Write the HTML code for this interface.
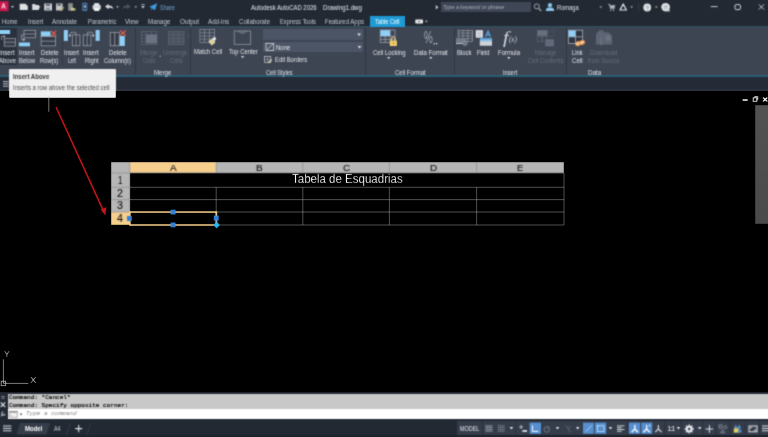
<!DOCTYPE html>
<html><head><meta charset="utf-8"><title>AutoCAD</title>
<style>
html,body{margin:0;padding:0;background:#000;}
body{width:768px;height:437px;position:relative;overflow:hidden;font-family:"Liberation Sans",sans-serif;}
.a{position:absolute;}
.t{position:absolute;white-space:nowrap;transform-origin:0 50%;}
svg{position:absolute;left:0;top:0;overflow:visible;}
#w{position:absolute;left:-6px;top:-6px;width:780px;height:449px;filter:url(#bl);}
#c{position:absolute;left:6px;top:6px;width:768px;height:437px;}
</style></head><body><svg width="0" height="0" style="position:absolute"><defs><filter id="bl" x="0" y="0" width="100%" height="100%" color-interpolation-filters="sRGB"><feConvolveMatrix order="3" kernelMatrix="0.03610 0.11780 0.03610 0.11780 0.38440 0.11780 0.03610 0.11780 0.03610" divisor="1" edgeMode="duplicate" preserveAlpha="true"/></filter></defs></svg><div id="w"><div id="c">
<!-- title + tabs -->
<div class="a" style="left:-6px;top:-6px;width:780px;height:32px;background:#222933"></div>
<!-- ribbon -->
<div class="a" style="left:-6px;top:26px;width:780px;height:50.5px;background:#3d4452"></div>
<div class="a" style="left:-6px;top:26px;width:780px;height:1.2px;background:#2c5463"></div>
<div class="a" style="left:-6px;top:75px;width:780px;height:1.5px;background:#2c5c73"></div>
<!-- strip below -->
<div class="a" style="left:-6px;top:76.5px;width:780px;height:13.5px;background:#252b36"></div>
<div class="a" style="left:-6px;top:89.7px;width:780px;height:1.6px;background:#3d4450"></div>
<!-- table cell tab -->
<div class="a" style="left:369.7px;top:16.3px;width:35px;height:10.5px;background:#1e9ad6"></div>
<!-- search box -->
<div class="a" style="left:440.8px;top:2.1px;width:90.2px;height:10px;background:#3f4757"></div>
<!-- insert above hover -->
<div class="a" style="left:-6px;top:28px;width:22.5px;height:36.5px;background:#2a313d"></div>
<!-- separators -->
<div class="a" style="left:135px;top:28px;width:1px;height:46px;background:#2f3744"></div>
<div class="a" style="left:190px;top:28px;width:1px;height:46px;background:#2f3744"></div>
<div class="a" style="left:365px;top:28px;width:1px;height:46px;background:#2f3744"></div>
<div class="a" style="left:454px;top:28px;width:1px;height:46px;background:#2f3744"></div>
<div class="a" style="left:566px;top:28px;width:1px;height:46px;background:#2f3744"></div>
<div class="a" style="left:62px;top:28px;width:1px;height:36px;background:#343c49"></div>
<!-- dropdowns -->
<div class="a" style="left:263px;top:29px;width:99.7px;height:10.8px;background:#4c5566"></div>
<div class="a" style="left:263px;top:42px;width:99.7px;height:9.6px;background:#4c5566"></div>
<!-- ICONS -->
<!--ICONS-->
<!-- tooltip -->
<div class="a" style="left:8.7px;top:68.5px;width:107px;height:29px;background:#f0f0f0;border-radius:1px"></div>
<!-- drawing right panel -->
<div class="a" style="left:754.8px;top:105px;width:19.2px;height:118.5px;background:linear-gradient(#525252,#4a4a4a)"></div>
<!-- table -->
<div class="a" style="left:111px;top:162px;width:453px;height:11px;background:#b6b6b6"></div>
<div class="a" style="left:111px;top:162px;width:18.7px;height:63px;background:#b6b6b6"></div>
<div class="a" style="left:129.7px;top:162px;width:86.5px;height:11px;background:#f6cf8e"></div>
<div class="a" style="left:111px;top:212px;width:18.7px;height:13px;background:#f6cf8e"></div>
<!-- command line -->
<div class="a" style="left:-6px;top:391.5px;width:780px;height:28px;background:#222933"></div>
<div class="a" style="left:8px;top:394px;width:766px;height:15.4px;background:#c8c8c8"></div>
<div class="a" style="left:8px;top:409.4px;width:766px;height:9.9px;background:#ffffff"></div>
<!-- status bar -->
<div class="a" style="left:-6px;top:419.3px;width:780px;height:23.7px;background:#222933"></div>
<div class="a" style="left:457px;top:421px;width:317px;height:14.6px;background:#353d4b"></div>
<div class="a" style="left:-6px;top:434.8px;width:780px;height:8.2px;background:#1d232c"></div>
<svg width="768" height="437" viewBox="0 0 768 437">
<!-- ===== title bar ===== -->
<g id="titlebar">
<rect x="-6" y="1.2" width="14.5" height="10" fill="#c8184e"/>
<path d="M1.3 8.4 L3 3.2 L4.1 3.2 L5.8 8.4 L4.7 8.4 L4.35 7.3 L2.75 7.3 L2.4 8.4 Z M3 6.4 L4.1 6.4 L3.55 4.6 Z" fill="#fbe4ea"/>
<path d="M11 6 L14 6 L12.5 8 Z" fill="#c8ccd4"/>
<!-- new -->
<path d="M19.7 3.8 L25.5 3.8 L27.8 6 L27.8 10 L19.7 10 Z" fill="#dfe1e4"/>
<!-- open -->
<path d="M32.2 4 L35 4 L35.8 5 L39 5 L39 6.2 L40.3 6.2 L38.6 10 L32.2 10 Z" fill="#d9dbdf"/>
<!-- save -->
<rect x="44.2" y="3.5" width="7.8" height="7" fill="#cfd2d6"/><rect x="45.8" y="3.5" width="4.4" height="2.6" fill="#6d7480"/><rect x="46" y="7.6" width="4" height="2.9" fill="#8e949e"/>
<!-- save as -->
<rect x="56" y="3.5" width="6.6" height="7" fill="#c4c7cc"/><rect x="57.2" y="3.5" width="3.8" height="2.4" fill="#6d7480"/><path d="M60 10.5 L63.5 6.5 L64 8 L61.5 11 Z" fill="#b7a76a"/>
<!-- import pdf-ish -->
<rect x="68.2" y="3.2" width="4.6" height="7.3" fill="#8c9088"/><path d="M70.6 10.6 L71.4 7.6 L75.4 8.4 L75.4 10.6 Z" fill="#cfcf96"/>
<!-- mobile -->
<rect x="82.2" y="2.8" width="5.2" height="8.2" rx="0.8" fill="#4f79a6"/><rect x="83.1" y="4" width="3.4" height="5.4" fill="#2d3f58"/><rect x="83.8" y="5.4" width="2.2" height="2.2" fill="#9fbfe0"/>
<!-- print -->
<rect x="92.6" y="5" width="8.2" height="4.6" rx="1" fill="#d5d8dc"/><rect x="94.2" y="3.2" width="5" height="2.2" fill="#eceef0"/><rect x="94.2" y="8" width="5" height="3" fill="#f2f3f5"/>
<!-- undo -->
<path d="M105 6.6 L108.6 3.9 L108.6 5.5 C111.3 5.5 112.9 6.6 113.3 9 C112 7.9 110.8 7.6 108.6 7.7 L108.6 9.3 Z" fill="#d9dce0"/>
<path d="M116.2 6.2 L118.8 6.2 L117.5 7.9 Z" fill="#c8ccd4"/>
<!-- redo dim -->
<path d="M130.6 6.6 L127 3.9 L127 5.5 C124.4 5.5 123 6.6 122.7 9 C124 7.9 125 7.6 127 7.7 L127 9.3 Z" fill="#4e5562"/>
<path d="M134.5 6.2 L137.1 6.2 L135.8 7.9 Z" fill="#aeb3bc"/>
<path d="M141.3 4.6 L144.7 4.6" stroke="#c8ccd4" stroke-width="0.8"/><path d="M141.2 6 L144.8 6 L143 8.4 Z" fill="#c8ccd4"/>
<!-- share -->
<path d="M149.2 6.8 L157.2 3.2 L155 10.6 L152.8 8.4 L151.6 10.4 L151.4 7.8 Z" fill="#3d9be0"/>
<!-- search arrow -->
<path d="M435.8 5 L438.4 7.2 L435.8 9.4 Z" fill="#d0d4da"/>
<!-- magnifier -->
<circle cx="536.8" cy="6.4" r="2.5" fill="none" stroke="#b0b6bf" stroke-width="0.9"/><path d="M538.6 8.4 L541.2 11" stroke="#b0b6bf" stroke-width="1.1"/>
<!-- user -->
<circle cx="550" cy="5.2" r="2.1" fill="#8ec6ee"/><path d="M545.8 11 C545.8 8 548 7.6 550 7.6 C552 7.6 554.2 8 554.2 11 Z" fill="#8ec6ee"/>
<path d="M599.5 6.4 L602.1 6.4 L600.8 8.1 Z" fill="#c8ccd4"/>
<!-- cart -->
<path d="M608 4.2 L609.4 4.2 L610.4 8.6 L614.2 8.6 L614.9 5.4 L609.8 5.4" fill="#aeb4bd" stroke="#aeb4bd" stroke-width="0.7"/><circle cx="610.8" cy="10.2" r="0.7" fill="#c0c4cb"/><circle cx="613.6" cy="10.2" r="0.7" fill="#c0c4cb"/>
<!-- autodesk A -->
<path d="M623.2 4 L626.4 10 L620 10 Z" fill="none" stroke="#e8eaee" stroke-width="1.2" stroke-linejoin="round"/>
<path d="M630.4 6.4 L633 6.4 L631.7 8.1 Z" fill="#c8ccd4"/>
<rect x="638.4" y="3" width="0.7" height="9" fill="#3a4250"/>
<!-- help -->
<circle cx="647.2" cy="7.5" r="3.9" fill="#dcdfe3"/>
<path d="M655 6.4 L657.6 6.4 L656.3 8.1 Z" fill="#c8ccd4"/>
<!-- chat -->
<path d="M661.4 7.4 A4.2 4 0 1 1 666 11.3 L669.8 11.4 L669.6 8 Z" fill="#dcdfe3"/><circle cx="665.6" cy="7.3" r="4.1" fill="#dcdfe3"/><path d="M664 6.2 H668 M664 8 H667" stroke="#8a909a" stroke-width="0.7"/>
<!-- window controls -->
<rect x="710.8" y="6.2" width="6.8" height="0.9" fill="#d8dbe0"/>
<rect x="735" y="4.6" width="5.4" height="5" rx="1.2" fill="none" stroke="#d8dbe0" stroke-width="1"/>
<path d="M758.8 4.4 L764 9.6 M764 4.4 L758.8 9.6" stroke="#d8dbe0" stroke-width="0.9"/>
<!-- tab extra icon -->
<rect x="415.3" y="19.4" width="7.7" height="4" rx="0.6" fill="#e8eaee"/><rect x="418" y="21" width="2.2" height="0.8" fill="#555"/>
<path d="M425 20.8 L427.6 20.8 L426.3 22.5 Z" fill="#c8ccd4"/>
</g>
<!-- ===== ribbon icons ===== -->
<g id="ribbon" fill="none" stroke="#a6acb7" stroke-width="0.7">
<!-- insert above -->
<rect x="-6" y="30" width="16.1" height="4" fill="#8fd0f7" stroke="none"/>
<rect x="4.2" y="38.3" width="11.4" height="7.8" fill="#343b47"/><path d="M4.2 42.2 H15.4"/>
<path d="M1.6 40 V36.4 H4.6"/><path d="M3.8 35.2 L5.4 36.4 L3.8 37.6 Z" fill="#e8eaee" stroke="none"/>
<!-- insert below -->
<rect x="24" y="30.3" width="11.4" height="7.5" fill="#343b47"/><path d="M24 34 H35.4"/>
<rect x="18.8" y="42.5" width="11.2" height="3.8" fill="#8fd0f7" stroke="none"/>
<path d="M24 35 H21.6 V39.8 H24"/><path d="M23.4 38.5 L25.2 39.8 L23.4 41.1 Z" fill="#e8eaee" stroke="none"/>
<!-- delete rows -->
<rect x="40.8" y="31.4" width="9.8" height="5" fill="#8fd0f7" stroke="none"/>
<rect x="41.1" y="36.5" width="14.4" height="9.4" fill="#343b47"/><path d="M41.1 41.2 H55.5"/>
<path d="M51.4 30.9 L56.2 36 M56.2 30.9 L51.4 36" stroke="#e2604c" stroke-width="1.3"/>
<!-- insert left -->
<rect x="63.8" y="30" width="4.1" height="10.9" fill="#8fd0f7" stroke="none"/>
<rect x="72.3" y="34.9" width="7.6" height="10.9" fill="#343b47"/><path d="M76.1 34.9 V45.8"/>
<path d="M75.8 34.9 V32.3 H71 L70.2 34.8"/><circle cx="69.9" cy="35.6" r="0.9" fill="#eef0f3" stroke="none"/>
<!-- insert right -->
<rect x="95.6" y="30" width="4.1" height="10.9" fill="#8fd0f7" stroke="none"/>
<rect x="83.3" y="34.9" width="7.6" height="10.9" fill="#343b47"/><path d="M87.1 34.9 V45.8"/>
<path d="M87.5 34.9 V32.3 H92.4 L93.1 34.8"/><circle cx="93.2" cy="35.6" r="0.9" fill="#eef0f3" stroke="none"/>
<!-- delete columns -->
<rect x="110.2" y="32.3" width="9" height="13.5" fill="#343b47"/><path d="M114.7 32.3 V45.8"/>
<rect x="119.6" y="36" width="5.2" height="10" fill="#8fd0f7" stroke="none"/>
<path d="M120.2 30.5 L125.8 35.7 M125.8 30.5 L120.2 35.7" stroke="#e2604c" stroke-width="1.3"/>
<!-- merge cells (disabled) -->
<g stroke="#5f6776">
<rect x="141.4" y="31.6" width="15.6" height="13"/><path d="M141.4 35 H157 M141.4 38.4 H146 M141.4 41.6 H146 M146 31.6 V44.6 M151.5 31.6 V35"/>
<rect x="146" y="34.4" width="11" height="9" fill="#6b7382" stroke="none"/>
<path d="M159.2 55.8 L161.2 55.8 L160.2 57.2 Z" fill="#aeb3bc" stroke="none"/>
<!-- unmerge -->
<rect x="168.4" y="31.6" width="15.6" height="13" fill="#474f5d"/><path d="M168.4 35 H184 M168.4 38.4 H184 M168.4 41.6 H184 M173.2 31.6 V44.6 M178.6 31.6 V44.6"/>
</g>
<path d="M188 35.8 L189.4 35.8 L188.7 36.8 Z" fill="#8a909c" stroke="none"/>
<!-- match cell -->
<g stroke="#959ca8" stroke-width="0.6"><rect x="199.9" y="29.4" width="14.8" height="13.1"/><path d="M199.9 32.7 H214.7 M199.9 36 H214.7 M199.9 39.2 H214.7 M204.5 29.4 V42.5 M209.4 29.4 V42.5"/></g>
<path d="M208.2 41.4 L211.8 38.6 L215.4 42.6 L211.8 45.6 Z" fill="#ddd3a0" stroke="none"/><path d="M212 38.8 L214.6 36.8 L216.2 38.6 L214.6 41.6 Z" fill="#eeeeea" stroke="none"/>
<!-- top center -->
<rect x="234.2" y="31" width="16.5" height="13.3" stroke="#9aa1ad"/><path d="M237.8 31.2 L242.5 33.8 L247.2 31.2 Z" fill="#5a6271" stroke="#8a919d" stroke-width="0.5"/>
<path d="M241 56 L244.2 56 L242.6 58.2 Z" fill="#d8dbe0" stroke="none"/>
<!-- dropdown arrows -->
<path d="M357.2 33.6 L361 33.6 L359.1 36 Z" fill="#e0e3e8" stroke="none"/>
<path d="M357.6 46 L361.4 46 L359.5 48.4 Z" fill="#e0e3e8" stroke="none"/>
<rect x="266" y="43.3" width="7.8" height="7.2" stroke="#e8eaee"/><path d="M267 49.6 L272.8 44.2" stroke="#e8eaee"/>
<!-- edit borders -->
<rect x="264.4" y="56.4" width="6.4" height="6.2" stroke="#c8ccd4" stroke-width="0.7"/><path d="M267.6 56.4 V62.6 M264.4 59.5 H270.8" stroke-width="0.6"/><path d="M268.6 62.8 L271.6 59.6" stroke="#e8e2b8" stroke-width="1.3"/>
<!-- cell locking -->
<rect x="380.2" y="30" width="14.8" height="12.6"/><path d="M380.2 36.2 H395 M380.2 39.4 H395 M385.2 30 V42.6 M390.2 30 V42.6"/>
<rect x="380.4" y="30.2" width="9.6" height="5.8" fill="#8fd0f7" stroke="none"/>
<path d="M391.5 40.8 V39 A1.9 1.9 0 0 1 395.3 39 V40.8" stroke="#f3cf6a" stroke-width="1"/>
<rect x="389.8" y="40.4" width="7.1" height="5.6" rx="0.6" fill="#f3cf6a" stroke="none"/><rect x="393" y="42.2" width="0.8" height="2" fill="#a07c28" stroke="none"/>
<path d="M387.1 57 L390.3 57 L388.7 59.2 Z" fill="#d8dbe0" stroke="none"/>
<!-- data format dots -->
<rect x="433.6" y="43" width="1.3" height="1.3" fill="#e8eaee" stroke="none"/><rect x="436" y="43" width="1.3" height="1.3" fill="#e8eaee" stroke="none"/>
<path d="M429.2 57 L432.4 57 L430.8 59.2 Z" fill="#d8dbe0" stroke="none"/>
<!-- block -->
<rect x="458.2" y="30.3" width="14.3" height="11.2" stroke="#aab0bb" stroke-width="0.6"/><path d="M458.2 33.1 H472.5 M458.2 35.9 H472.5 M458.2 38.7 H472.5 M463 30.3 V41.5 M467.8 30.3 V41.5" stroke="#aab0bb" stroke-width="0.6"/>
<rect x="456" y="38.2" width="10.2" height="5.4" fill="#737b89" stroke="none"/><rect x="456" y="43" width="8" height="0.9" fill="#c8ccd4" stroke="none"/><circle cx="465" cy="43.2" r="2.2" fill="#6d7583" stroke="#9aa0ac" stroke-width="0.6"/>
<!-- field -->
<rect x="475.8" y="30.2" width="7" height="7.4" fill="#eef0f2" stroke="none"/><path d="M477 32 H481.6 M477 33.8 H481.6 M477 35.6 H481.6" stroke="#7a8290" stroke-width="0.6"/>
<path d="M485.5 36.8 L488 31.2 L490.5 36.8 M486.4 34.9 H489.6" stroke="#5aa9e6" stroke-width="1.1"/>
<rect x="479.8" y="37.8" width="12.2" height="1.6" fill="#5a9fdc" stroke="none"/><rect x="479.8" y="39.4" width="12.2" height="2" fill="#90ccf6" stroke="none"/><rect x="479.8" y="41.4" width="12.2" height="4.2" fill="#dfe3e8" stroke="none"/><path d="M479.8 43.5 H492" stroke="#9aa0aa" stroke-width="0.5"/>
<path d="M507.2 57 L510.4 57 L508.8 59.2 Z" fill="#d8dbe0" stroke="none"/>
<!-- manage cell contents (disabled) -->
<rect x="537.2" y="30.2" width="10.2" height="5.6" fill="#687080" stroke="none"/>
<rect x="537.4" y="36.6" width="4.4" height="5" stroke="#5f6776" stroke-width="0.6"/><rect x="542.4" y="36.6" width="4.4" height="5" stroke="#5f6776" stroke-width="0.6"/>
<rect x="545.3" y="39.4" width="8.7" height="6.8" fill="#687080" stroke="none"/><path d="M545.3 41.8 H554 M545.3 44 H554" stroke="#4a5262" stroke-width="0.5"/>
<rect x="548" y="31" width="5.4" height="5.4" stroke="#4f5766" stroke-width="0.6"/>
<!-- link cell -->
<rect x="568.3" y="30.2" width="14.4" height="13.2" fill="#2c3441" stroke="#b8bdc7" stroke-width="0.7"/>
<rect x="568.6" y="30.4" width="6.8" height="6.4" fill="#8fd0f7" stroke="none"/>
<path d="M575.5 30.2 V43.4 M568.3 36.8 H582.7" stroke="#b8bdc7" stroke-width="0.7"/>
<ellipse cx="578.2" cy="43.6" rx="2.7" ry="1.9" fill="#f0d2a6" stroke="#e08a48" stroke-width="1.1" transform="rotate(-18 578.2 43.6)"/>
<ellipse cx="582" cy="42.5" rx="2.7" ry="1.9" fill="#f0d2a6" stroke="#e08a48" stroke-width="1.1" transform="rotate(-18 582 42.5)"/>
<!-- download (disabled) -->
<path d="M596 44.6 V36 C596 32 599 30.2 602 30.2 C603.4 30.2 604 31.4 604 32.4 C607 31.6 611.8 33 612 37 V44.6 Z" fill="#5d6574" stroke="none"/>
<rect x="605.6" y="35.6" width="5" height="5" fill="#6b7382" stroke="none"/><rect x="600.4" y="37" width="1.4" height="8.4" fill="#6b7382" stroke="none"/>
</g>
<!-- ===== strip hamburger ===== -->
<g stroke="#d0d4da" stroke-width="0.9"><path d="M3 81.6 H8.4 M3 83.9 H8.4 M3 86.2 H8.4"/></g>
<!-- cursor line + red arrow -->
<rect x="48.3" y="97" width="1" height="15" fill="#8c8c8c"/>
<path d="M56 107 L104.2 212.6" stroke="#c4161c" stroke-width="1.7"/>
<path d="M105.4 215.8 L100.6 209.6 L106.4 207 Z" fill="#c4161c"/>
<!-- viewport controls -->
<rect x="742.6" y="99.1" width="5.2" height="1.9" fill="#f4f4f4"/>
<rect x="753.2" y="97.8" width="3.6" height="3.6" fill="none" stroke="#f0f0f0" stroke-width="1"/><path d="M754.6 97.4 V96.5 H757.8 V99.8 H757" fill="none" stroke="#f0f0f0" stroke-width="0.9"/>
<path d="M763 97.6 L767.4 101.6 M767.4 97.6 L763 101.6" stroke="#f0f0f0" stroke-width="1.3"/>
<!-- table grid -->
<g stroke="#6c6c6c" stroke-width="0.9" fill="none">
<path d="M129.7 173 H564 M129.7 187.3 H564 M129.7 199.6 H564 M129.7 212 H564 M129.7 225 H564"/>
<path d="M216.2 187.3 V225 M302.8 187.3 V225 M389.4 187.3 V225 M476.6 187.3 V225 M564 173 V225"/>
</g>
<g stroke="#8e8e8e" stroke-width="0.7"><path d="M111 173 H129.7 M111 187.3 H129.7 M111 199.6 H129.7 M111 212 H129.7 M216.2 162 V173 M302.8 162 V173 M389.4 162 V173 M476.6 162 V173 M129.7 162 V225"/></g>
<!-- selection -->
<rect x="129.9" y="212.1" width="86.4" height="12.9" fill="none" stroke="#f8cf88" stroke-width="1.8"/>
<g fill="#2f7fd8"><rect x="127" y="216" width="5" height="5"/><rect x="170.6" y="209.6" width="5" height="5"/><rect x="170.6" y="222.4" width="5" height="5"/><rect x="213.8" y="215.6" width="5" height="5"/></g>
<path d="M216.6 221.6 L220 225 L216.6 228.4 L213.2 225 Z" fill="#29b6f0"/>
<!-- UCS -->
<g stroke="#adadad" stroke-width="0.9" fill="none"><path d="M3.4 359 V383.4 H28.4"/><rect x="1.2" y="381.2" width="4.4" height="4.4"/></g>
<!-- command left strip -->
<g fill="#c8ccd4"><rect x="1.6" y="396" width="1" height="1"/><rect x="3.4" y="396" width="1" height="1"/><rect x="1.6" y="397.8" width="1" height="1"/><rect x="3.4" y="397.8" width="1" height="1"/></g>
<path d="M0.6 402.4 L5.2 407 M5.2 402.4 L0.6 407" stroke="#e0e3e8" stroke-width="1.1"/>
<path d="M0.8 416.4 L3.8 413.4 M3.2 411.8 A1.8 1.8 0 1 0 5.2 414" stroke="#d0d4da" stroke-width="1" fill="none"/>
<!-- command input icon -->
<rect x="9.2" y="411.2" width="8" height="6" fill="#f4f4f4" stroke="#8a8a8a" stroke-width="0.7"/><rect x="9.2" y="411.2" width="8" height="1.6" fill="#9a9a9a"/><path d="M10.4 415 L12 416" stroke="#666" stroke-width="0.5"/>
<path d="M19.6 413.6 L22.4 413.6 L21 415.4 Z" fill="#555"/>
<!-- status bar left -->
<g stroke="#e0e3e8" stroke-width="1"><path d="M3 426 H11.4 M3 428.4 H11.4 M3 430.8 H11.4"/></g>
<path d="M20 423 H50 L46.5 434.6 H16.5 Z" fill="#353d4a"/>
<path d="M66.5 434.4 L70 423.2" stroke="#343c49" stroke-width="0.9"/><path d="M87 434.4 L90.5 423.2" stroke="#343c49" stroke-width="0.9"/>
<path d="M75.2 428.6 H82.2 M78.7 425 V432.2" stroke="#e0e3e8" stroke-width="1.1"/>
<!-- status bar right icons -->
<rect x="482.0" y="421" width="0.8" height="14" fill="#262d38"/><rect x="627.2" y="421" width="0.8" height="14" fill="#262d38"/><rect x="664.4" y="421" width="0.8" height="14" fill="#262d38"/><rect x="680.6" y="421" width="0.8" height="14" fill="#262d38"/><rect x="702.4" y="421" width="0.8" height="14" fill="#262d38"/><rect x="715.6" y="421" width="0.8" height="14" fill="#262d38"/><rect x="729.6" y="421" width="0.8" height="14" fill="#262d38"/><rect x="759.3000000000001" y="421" width="0.8" height="14" fill="#262d38"/>
<g stroke="#b4bac4" stroke-width="0.55" fill="none">
<path d="M485 425.8 H492.8 M485 427.6 H492.8 M485 429.4 H492.8 M485 431.2 H492.8"/><path d="M487 425 V432 M489 425 V432 M491 425 V432" stroke-width="0.35"/>
<path d="M498.2 425.8 H504.4 M498.2 427.6 H504.4 M498.2 429.4 H504.4 M498.2 431.2 H504.4" stroke-dasharray="0.9 0.9" stroke-width="0.9" stroke="#c0c5ce"/>
</g>
<path d="M509.6 427 L513.2 427 L511.4 429.6 Z" fill="#e0e3e8"/>
<rect x="515.4" y="422" width="0.7" height="14" fill="#2a313d"/>
<path d="M519.2 427 H523 M521.1 425 V429" stroke="#d0d4da" stroke-width="0.8"/><rect x="522.4" y="430" width="4.6" height="2" fill="#d0d4da"/>
<rect x="529.6" y="422.6" width="11.4" height="11.2" fill="#558fd0"/><path d="M532.4 425.4 V431.4 H538.2" stroke="#fff" stroke-width="1" fill="none"/>
<circle cx="546.8" cy="429.4" r="2.8" fill="none" stroke="#8a909c" stroke-width="0.7"/><path d="M546.8 429.4 L548.8 426.6" stroke="#8a909c" stroke-width="0.6"/>
<path d="M555.7 427 L559.3 427 L557.5 429.6 Z" fill="#e0e3e8"/>
<path d="M565.8 425.4 L570.6 432.6 M568.2 429 L570.4 426.2" stroke="#6f7786" stroke-width="0.7"/>
<path d="M575.9 427 L579.5 427 L577.7 429.6 Z" fill="#e0e3e8"/>
<rect x="583" y="422.6" width="10.8" height="11.2" fill="#558fd0"/><path d="M585.8 431.6 L591.9 425.4" stroke="#c4dbf4" stroke-width="0.9"/>
<rect x="594.8" y="422.6" width="11.4" height="11.2" fill="#558fd0"/><rect x="597.6" y="425.8" width="6.4" height="5.6" fill="none" stroke="#c4dbf4" stroke-width="0.8"/><rect x="596.8" y="425" width="1.5" height="1.5" fill="#c4dbf4"/>
<path d="M608.7 427 L612.3 427 L610.5 429.6 Z" fill="#e0e3e8"/>
<path d="M617 425.9 H624.4 M617 427.7 H621.6 M617 429.5 H624.4 M617 431.3 H621.6" stroke="#e0e3e8" stroke-width="0.9"/>
<rect x="628.8" y="422.6" width="11.4" height="11.2" fill="#558fd0"/><path d="M634.8 425 V429 L631.6 432.2 M634.8 429 L638 432.2" stroke="#fff" stroke-width="1.3" fill="none"/>
<rect x="641.3" y="422.6" width="10.9" height="11.2" fill="#558fd0"/><path d="M646.6 425 V429 L643.4 432.2 M646.6 429 L649.8 432.2" stroke="#fff" stroke-width="1.3" fill="none"/><path d="M648.6 425.6 H650.4 M649.5 424.7 V426.5" stroke="#fff" stroke-width="0.5"/>
<path d="M658.4 425 V429 L655.2 432.2 M658.4 429 L661.6 432.2" stroke="#d8dbe0" stroke-width="1.2" fill="none"/>
<path d="M676.7 427 L680.3 427 L678.5 429.6 Z" fill="#e0e3e8"/>
<circle cx="689.2" cy="429" r="2.6" fill="none" stroke="#e4e7eb" stroke-width="1.8"/><g stroke="#e4e7eb" stroke-width="1.3"><path d="M689.2 424.4 V433.6 M684.6 429 H693.8 M686 425.8 L692.4 432.2 M692.4 425.8 L686 432.2"/></g><circle cx="689.2" cy="429" r="1.2" fill="#353d4b"/>
<path d="M697.9 427 L701.5 427 L699.7 429.6 Z" fill="#e0e3e8"/>
<path d="M705.6 429 H713.2 M709.4 425.2 V432.8" stroke="#e4e7eb" stroke-width="1"/>
<g stroke="#8e95a2" stroke-width="0.8" fill="none"><rect x="719" y="425" width="3" height="3"/><circle cx="725.4" cy="427.2" r="1.5"/><path d="M720.6 432.8 L722.6 429.4 L724.6 432.8 Z"/></g>
<path d="M734 428.6 L735.8 424.6 L737.6 428.6 Z M737.4 428.6 L739.2 424.6 L741 428.6 Z" fill="#5a9ad8"/><rect x="733.8" y="428.4" width="5" height="4.2" fill="#e6d262"/><rect x="738.2" y="429.6" width="3.2" height="3" fill="#4f8fd0"/>
<rect x="744.2" y="422" width="0.7" height="14" fill="#2a313d"/>
<rect x="749" y="426" width="8" height="5.8" fill="none" stroke="#e4e7eb" stroke-width="1"/><path d="M750.4 429 V427.4 H752.2 M755.6 428.8 V430.4 H753.8" stroke="#e4e7eb" stroke-width="0.7" fill="none"/>
<g stroke="#e0e3e8" stroke-width="1"><path d="M762 426 H774 M762 428.4 H774 M762 430.8 H774"/></g>

</svg>
<span class="t" style="left:250.8px;top:2.8px;font:normal normal 7px/9px 'Liberation Sans', sans-serif;color:#e8eaee;transform:scaleX(0.846)">Autodesk AutoCAD 2026</span>
<span class="t" style="left:323.0px;top:2.8px;font:normal normal 7px/9px 'Liberation Sans', sans-serif;color:#e8eaee;transform:scaleX(0.879)">Drawing1.dwg</span>
<span class="t" style="left:160.0px;top:2.8px;font:normal normal 7px/9px 'Liberation Sans', sans-serif;color:#78a4cc;transform:scaleX(0.787)">Share</span>
<span class="t" style="left:442.5px;top:3.5px;font:italic normal 5.8px/7.8px 'Liberation Sans', sans-serif;color:#a8aeb8;transform:scaleX(0.919)">Type a keyword or phrase</span>
<span class="t" style="left:557.0px;top:2.8px;font:normal normal 7px/9px 'Liberation Sans', sans-serif;color:#e0e3e8;transform:scaleX(0.820)">Romaga</span>
<span class="t" style="left:2.0px;top:16.5px;font:normal normal 7px/9px 'Liberation Sans', sans-serif;color:#c8ccd3;transform:scaleX(0.829)">Home</span>
<span class="t" style="left:28.0px;top:16.5px;font:normal normal 7px/9px 'Liberation Sans', sans-serif;color:#c8ccd3;transform:scaleX(0.874)">Insert</span>
<span class="t" style="left:52.3px;top:16.5px;font:normal normal 7px/9px 'Liberation Sans', sans-serif;color:#c8ccd3;transform:scaleX(0.892)">Annotate</span>
<span class="t" style="left:87.5px;top:16.5px;font:normal normal 7px/9px 'Liberation Sans', sans-serif;color:#c8ccd3;transform:scaleX(0.842)">Parametric</span>
<span class="t" style="left:125.0px;top:16.5px;font:normal normal 7px/9px 'Liberation Sans', sans-serif;color:#c8ccd3;transform:scaleX(0.897)">View</span>
<span class="t" style="left:147.7px;top:16.5px;font:normal normal 7px/9px 'Liberation Sans', sans-serif;color:#c8ccd3;transform:scaleX(0.882)">Manage</span>
<span class="t" style="left:179.5px;top:16.5px;font:normal normal 7px/9px 'Liberation Sans', sans-serif;color:#c8ccd3;transform:scaleX(0.904)">Output</span>
<span class="t" style="left:208.0px;top:16.5px;font:normal normal 7px/9px 'Liberation Sans', sans-serif;color:#c8ccd3;transform:scaleX(0.885)">Add-ins</span>
<span class="t" style="left:239.0px;top:16.5px;font:normal normal 7px/9px 'Liberation Sans', sans-serif;color:#c8ccd3;transform:scaleX(0.866)">Collaborate</span>
<span class="t" style="left:280.0px;top:16.5px;font:normal normal 7px/9px 'Liberation Sans', sans-serif;color:#c8ccd3;transform:scaleX(0.828)">Express Tools</span>
<span class="t" style="left:325.3px;top:16.5px;font:normal normal 7px/9px 'Liberation Sans', sans-serif;color:#c8ccd3;transform:scaleX(0.857)">Featured Apps</span>
<span class="t" style="left:374.7px;top:16.5px;font:normal normal 7px/9px 'Liberation Sans', sans-serif;color:#ffffff;transform:scaleX(0.797)">Table Cell</span>
<span class="t" style="left:-1.0px;top:47.9px;font:normal normal 7px/9px 'Liberation Sans', sans-serif;color:#e4e7eb;transform:scaleX(0.896)">Insert</span>
<span class="t" style="left:-1.5px;top:55.9px;font:normal normal 7px/9px 'Liberation Sans', sans-serif;color:#e4e7eb;transform:scaleX(0.856)">Above</span>
<span class="t" style="left:19.3px;top:47.9px;font:normal normal 7px/9px 'Liberation Sans', sans-serif;color:#e4e7eb;transform:scaleX(0.879)">Insert</span>
<span class="t" style="left:19.0px;top:55.9px;font:normal normal 7px/9px 'Liberation Sans', sans-serif;color:#e4e7eb;transform:scaleX(0.839)">Below</span>
<span class="t" style="left:40.7px;top:47.9px;font:normal normal 7px/9px 'Liberation Sans', sans-serif;color:#e4e7eb;transform:scaleX(0.870)">Delete</span>
<span class="t" style="left:40.0px;top:55.9px;font:normal normal 7px/9px 'Liberation Sans', sans-serif;color:#e4e7eb;transform:scaleX(0.825)">Row(s)</span>
<span class="t" style="left:64.3px;top:47.9px;font:normal normal 7px/9px 'Liberation Sans', sans-serif;color:#e4e7eb;transform:scaleX(0.856)">Insert</span>
<span class="t" style="left:68.3px;top:55.9px;font:normal normal 7px/9px 'Liberation Sans', sans-serif;color:#e4e7eb;transform:scaleX(0.659)">Left</span>
<span class="t" style="left:83.3px;top:47.9px;font:normal normal 7px/9px 'Liberation Sans', sans-serif;color:#e4e7eb;transform:scaleX(0.896)">Insert</span>
<span class="t" style="left:84.7px;top:55.9px;font:normal normal 7px/9px 'Liberation Sans', sans-serif;color:#e4e7eb;transform:scaleX(0.832)">Right</span>
<span class="t" style="left:109.3px;top:47.9px;font:normal normal 7px/9px 'Liberation Sans', sans-serif;color:#e4e7eb;transform:scaleX(0.875)">Delete</span>
<span class="t" style="left:104.3px;top:55.9px;font:normal normal 7px/9px 'Liberation Sans', sans-serif;color:#e4e7eb;transform:scaleX(0.836)">Column(s)</span>
<span class="t" style="left:140.0px;top:47.9px;font:normal normal 7px/9px 'Liberation Sans', sans-serif;color:#646c7a;transform:scaleX(0.872)">Merge</span>
<span class="t" style="left:143.3px;top:55.9px;font:normal normal 7px/9px 'Liberation Sans', sans-serif;color:#646c7a;transform:scaleX(0.797)">Cells</span>
<span class="t" style="left:163.3px;top:47.9px;font:normal normal 7px/9px 'Liberation Sans', sans-serif;color:#646c7a;transform:scaleX(0.847)">Unmerge</span>
<span class="t" style="left:170.0px;top:55.9px;font:normal normal 7px/9px 'Liberation Sans', sans-serif;color:#646c7a;transform:scaleX(0.816)">Cells</span>
<span class="t" style="left:193.9px;top:47.2px;font:normal normal 7px/9px 'Liberation Sans', sans-serif;color:#e4e7eb;transform:scaleX(0.850)">Match Cell</span>
<span class="t" style="left:228.5px;top:47.2px;font:normal normal 7px/9px 'Liberation Sans', sans-serif;color:#e4e7eb;transform:scaleX(0.841)">Top Center</span>
<span class="t" style="left:276.3px;top:42.8px;font:normal normal 7px/9px 'Liberation Sans', sans-serif;color:#e4e7eb;transform:scaleX(0.861)">None</span>
<span class="t" style="left:274.7px;top:55.3px;font:normal normal 7px/9px 'Liberation Sans', sans-serif;color:#e4e7eb;transform:scaleX(0.833)">Edit Borders</span>
<span class="t" style="left:372.5px;top:47.9px;font:normal normal 7px/9px 'Liberation Sans', sans-serif;color:#e4e7eb;transform:scaleX(0.852)">Cell Locking</span>
<span class="t" style="left:413.7px;top:47.9px;font:normal normal 7px/9px 'Liberation Sans', sans-serif;color:#e4e7eb;transform:scaleX(0.869)">Data Format</span>
<span class="t" style="left:457.2px;top:47.9px;font:normal normal 7px/9px 'Liberation Sans', sans-serif;color:#e4e7eb;transform:scaleX(0.847)">Block</span>
<span class="t" style="left:477.2px;top:47.9px;font:normal normal 7px/9px 'Liberation Sans', sans-serif;color:#e4e7eb;transform:scaleX(0.823)">Field</span>
<span class="t" style="left:498.0px;top:47.9px;font:normal normal 7px/9px 'Liberation Sans', sans-serif;color:#e4e7eb;transform:scaleX(0.856)">Formula</span>
<span class="t" style="left:534.7px;top:47.9px;font:normal normal 7px/9px 'Liberation Sans', sans-serif;color:#646c7a;transform:scaleX(0.854)">Manage</span>
<span class="t" style="left:527.7px;top:55.9px;font:normal normal 7px/9px 'Liberation Sans', sans-serif;color:#646c7a;transform:scaleX(0.847)">Cell Contents</span>
<span class="t" style="left:571.5px;top:47.9px;font:normal normal 7px/9px 'Liberation Sans', sans-serif;color:#e4e7eb;transform:scaleX(0.818)">Link</span>
<span class="t" style="left:571.5px;top:55.9px;font:normal normal 7px/9px 'Liberation Sans', sans-serif;color:#e4e7eb;transform:scaleX(0.870)">Cell</span>
<span class="t" style="left:590.3px;top:47.9px;font:normal normal 7px/9px 'Liberation Sans', sans-serif;color:#646c7a;transform:scaleX(0.880)">Download</span>
<span class="t" style="left:588.2px;top:55.9px;font:normal normal 7px/9px 'Liberation Sans', sans-serif;color:#646c7a;transform:scaleX(0.829)">from Source</span>
<span class="t" style="left:154.3px;top:67.5px;font:normal normal 7px/9px 'Liberation Sans', sans-serif;color:#dfe2e7;transform:scaleX(0.877)">Merge</span>
<span class="t" style="left:265.7px;top:67.5px;font:normal normal 7px/9px 'Liberation Sans', sans-serif;color:#dfe2e7;transform:scaleX(0.804)">Cell Styles</span>
<span class="t" style="left:394.7px;top:67.5px;font:normal normal 7px/9px 'Liberation Sans', sans-serif;color:#dfe2e7;transform:scaleX(0.846)">Cell Format</span>
<span class="t" style="left:502.7px;top:67.5px;font:normal normal 7px/9px 'Liberation Sans', sans-serif;color:#dfe2e7;transform:scaleX(0.816)">Insert</span>
<span class="t" style="left:587.7px;top:67.5px;font:normal normal 7px/9px 'Liberation Sans', sans-serif;color:#dfe2e7;transform:scaleX(0.899)">Data</span>
<span class="t" style="left:13.0px;top:72.1px;font:normal bold 7px/9px 'Liberation Sans', sans-serif;color:#333;transform:scaleX(0.861)">Insert Above</span>
<span class="t" style="left:13.0px;top:84.0px;font:normal normal 6.5px/8.5px 'Liberation Sans', sans-serif;color:#484848;transform:scaleX(0.918)">Inserts a row above the selected cell</span>
<span class="t" style="left:169.7px;top:161.7px;font:normal normal 9.5px/11.5px 'Liberation Sans', sans-serif;color:#111;transform:scaleX(1.056);-webkit-text-stroke:0.1px #111">A</span>
<span class="t" style="left:256.2px;top:161.7px;font:normal normal 9.5px/11.5px 'Liberation Sans', sans-serif;color:#111;transform:scaleX(1.056);-webkit-text-stroke:0.1px #111">B</span>
<span class="t" style="left:342.7px;top:161.7px;font:normal normal 9.5px/11.5px 'Liberation Sans', sans-serif;color:#111;transform:scaleX(1.047);-webkit-text-stroke:0.1px #111">C</span>
<span class="t" style="left:429.7px;top:161.7px;font:normal normal 9.5px/11.5px 'Liberation Sans', sans-serif;color:#111;transform:scaleX(1.047);-webkit-text-stroke:0.1px #111">D</span>
<span class="t" style="left:517.2px;top:161.7px;font:normal normal 9.5px/11.5px 'Liberation Sans', sans-serif;color:#111;transform:scaleX(0.977);-webkit-text-stroke:0.1px #111">E</span>
<span class="t" style="left:117.8px;top:174.5px;font:normal normal 10px/12px 'Liberation Sans', sans-serif;color:#111;transform:scaleX(0.791);-webkit-text-stroke:0.1px #111">1</span>
<span class="t" style="left:117.3px;top:187.8px;font:normal normal 10px/12px 'Liberation Sans', sans-serif;color:#111;transform:scaleX(1.061);-webkit-text-stroke:0.1px #111">2</span>
<span class="t" style="left:117.3px;top:200.0px;font:normal normal 10px/12px 'Liberation Sans', sans-serif;color:#111;transform:scaleX(1.061);-webkit-text-stroke:0.1px #111">3</span>
<span class="t" style="left:117.3px;top:212.8px;font:normal normal 10px/12px 'Liberation Sans', sans-serif;color:#111;transform:scaleX(1.061);-webkit-text-stroke:0.1px #111">4</span>
<span class="t" style="left:291.6px;top:172.0px;font:normal normal 12px/14px 'Liberation Sans', sans-serif;color:#f2f2f2;transform:scaleX(0.959)">Tabela de Esquadrias</span>
<span class="t" style="left:4.2px;top:348.5px;font:normal normal 9px/11px 'Liberation Sans', sans-serif;color:#b4b4b4;transform:scaleX(0.964)">Y</span>
<span class="t" style="left:30.0px;top:375.0px;font:normal normal 9px/11px 'Liberation Sans', sans-serif;color:#b4b4b4;transform:scaleX(1.081)">X</span>
<span class="t" style="left:8.9px;top:394.0px;font:normal normal 6px/8px 'Liberation Mono', monospace;color:#000;transform:scaleX(1.005);-webkit-text-stroke:0.15px #000">Command: *Cancel*</span>
<span class="t" style="left:8.9px;top:401.6px;font:normal normal 6px/8px 'Liberation Mono', monospace;color:#000;transform:scaleX(1.005);-webkit-text-stroke:0.15px #000">Command: Specify opposite corner:</span>
<span class="t" style="left:26.2px;top:410.4px;font:italic normal 6px/8px 'Liberation Mono', monospace;color:#828282;transform:scaleX(1.002)">Type a command</span>
<span class="t" style="left:24.8px;top:423.9px;font:normal bold 7px/9px 'Liberation Sans', sans-serif;color:#ffffff;transform:scaleX(0.860)">Model</span>
<span class="t" style="left:54.4px;top:423.9px;font:normal normal 7px/9px 'Liberation Sans', sans-serif;color:#c8ccd2;transform:scaleX(0.771)">A4</span>
<span class="t" style="left:459.8px;top:424.9px;font:normal normal 6.5px/8.5px 'Liberation Sans', sans-serif;color:#eceef1;transform:scaleX(0.839)">MODEL</span>
<span class="t" style="left:667.6px;top:424.8px;font:normal bold 6.5px/8.5px 'Liberation Sans', sans-serif;color:#f0f2f4;transform:scaleX(0.702)">1:1</span>
<span class="t" style="left:423.8px;top:29.1px;font:normal normal 16px/18px 'Liberation Sans', sans-serif;color:#a4aab5;transform:scaleX(0.618)">%</span>
<span class="t" style="left:502.8px;top:27.9px;font:italic normal 17.5px/19.5px 'Liberation Serif', serif;color:#d8dbe0;transform:scaleX(1.149)">f</span>
<span class="t" style="left:509.3px;top:34.1px;font:italic normal 8.5px/10.5px 'Liberation Serif', serif;color:#d8dbe0;transform:scaleX(0.816)">(x)</span>
<span class="t" style="left:645.8px;top:3.6px;font:normal bold 6px/8px 'Liberation Sans', sans-serif;color:#808690;transform:scaleX(0.763)">?</span>
</div></div></body></html>
